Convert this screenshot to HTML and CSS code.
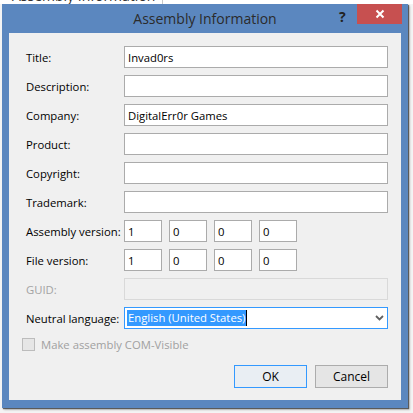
FILE: index.html
```html
<!DOCTYPE html>
<html>
<head>
<meta charset="utf-8">
<link rel="stylesheet" href="styles.css">
</head>
<body>
<div class="desktop">
  <div class="bgstrip"><span class="bgtext">Assembly Information</span><span class="bgline"></span></div>
  <div class="window">
    <div class="titlebar">
      <div class="title">Assembly Information</div>
      <div class="help">?</div>
      <div class="close">
        <svg width="10" height="10" viewBox="0 0 10 10"><path d="M1.5 1.5 L8.5 8.5 M8.5 1.5 L1.5 8.5" stroke="#fff" stroke-width="2" fill="none"/></svg>
      </div>
    </div>
    <div class="client">
      <div class="form">
        <label class="lbl">Title:</label><div class="tb">Invad0rs</div>
        <label class="lbl">Description:</label><div class="tb"></div>
        <label class="lbl">Company:</label><div class="tb">DigitalErr0r Games</div>
        <label class="lbl">Product:</label><div class="tb"></div>
        <label class="lbl">Copyright:</label><div class="tb"></div>
        <label class="lbl">Trademark:</label><div class="tb"></div>
        <label class="lbl">Assembly version:</label>
        <div class="ver"><div class="tb vb">1</div><div class="tb vb">0</div><div class="tb vb">0</div><div class="tb vb">0</div></div>
        <label class="lbl">File version:</label>
        <div class="ver"><div class="tb vb">1</div><div class="tb vb">0</div><div class="tb vb">0</div><div class="tb vb">0</div></div>
        <label class="lbl dis">GUID:</label><div class="tb tbdis"></div>
        <label class="lbl">Neutral language:</label>
        <div class="combo"><span class="sel">English (United States)</span><span class="caret"></span><span class="grow"></span>
          <svg class="chev" width="9" height="6" viewBox="0 0 9 6"><path d="M1 1 L4.5 4.5 L8 1" stroke="#606060" stroke-width="1.8" fill="none"/></svg>
        </div>
      </div>
      <div class="check"><span class="box"></span><span class="chktext">Make assembly COM-Visible</span></div>
      <div class="buttons"><div class="btn def">OK</div><div class="btn">Cancel</div></div>
    </div>
  </div>
</div>
</body>
</html>
```
FILE: styles.css
```css
html, body {
  margin: 0;
  padding: 0;
}
body {
  width: 413px;
  height: 413px;
  overflow: hidden;
  background: #f7f7f7;
  font-family: "Open Sans", "Noto Sans", sans-serif;
}
.desktop {
  width: 413px;
  height: 413px;
  background: #f4f4f4;
}
.bgstrip {
  height: 4px;
  overflow: hidden;
  background: #fff;
  display: flex;
  position: relative;
}
.bgtext {
  margin-left: 12px;
  margin-top: -12px;
  font-size: 14px;
  line-height: 16px;
  color: #333;
  width: 150px;
  white-space: nowrap;
}
.bgline {
  width: 1px;
  background: #c8c8c8;
}
.window {
  margin-left: 2px;
  width: 406px;
  height: 404px;
  background: #5b87bf;
  display: flex;
  flex-direction: column;
  box-shadow: 1px 1px 1px rgba(0,0,0,0.55), 2px 2px 2px rgba(0,0,0,0.2);
  position: relative;
}
.titlebar {
  height: 29px;
  position: relative;
}
.title {
  text-align: center;
  line-height: 29px;
  font-size: 14px;
  color: #2b2b2b;
}
.help {
  position: absolute;
  left: 337px;
  top: 4px;
  font-size: 14px;
  font-weight: bold;
  color: #222;
  line-height: 18px;
}
.close {
  position: absolute;
  left: 355px;
  top: 0;
  width: 45px;
  height: 20px;
  background: #c75050;
  display: flex;
  align-items: center;
  justify-content: center;
}
.client {
  flex: 1;
  margin: 0 7px 8px 7px;
  background: #f0f0f0;
  padding: 13px 13px 0 17px;
  font-size: 11.3px;
  color: #000;
}
.form {
  display: grid;
  grid-template-columns: 98px 1fr;
  grid-auto-rows: 22px;
  row-gap: 7px;
}
.lbl {
  display: flex;
  align-items: center;
  white-space: nowrap;
}
.lbl.dis {
  color: #a3a3a3;
}
.tb {
  box-sizing: border-box;
  height: 22px;
  border: 1px solid #ababab;
  background: #fff;
  padding-left: 3px;
  display: flex;
  align-items: center;
  white-space: nowrap;
}
.tbdis {
  background: #f0f0f0;
  border-color: #d9d9d9;
}
.ver {
  display: flex;
  gap: 7px;
}
.vb {
  width: 38px;
}
.combo {
  box-sizing: border-box;
  height: 22px;
  border: 1px solid #3399ff;
  background: #fff;
  padding-left: 2px;
  display: flex;
  align-items: center;
}
.sel {
  background: #3399ff;
  color: #fff;
  line-height: 16px;
  padding: 0 1px;
  white-space: nowrap;
}
.caret {
  width: 1px;
  height: 16px;
  background: #000;
}
.grow {
  flex: 1;
}
.chev {
  margin-right: 3px;
}
.check {
  margin-top: 9px;
  margin-left: -4px;
  display: flex;
  align-items: center;
  height: 13px;
  gap: 6px;
  color: #a0a0a0;
}
.box {
  box-sizing: border-box;
  width: 13px;
  height: 13px;
  border: 1px solid #bcbcbc;
  background: #e6e6e6;
}
.buttons {
  margin-top: 14px;
  display: flex;
  justify-content: flex-end;
  gap: 8px;
}
.btn {
  box-sizing: border-box;
  width: 73px;
  height: 23px;
  border: 1px solid #acacac;
  background: #e5e5e5;
  display: flex;
  align-items: center;
  justify-content: center;
  font-size: 12px;
}
.btn.def {
  border-color: #3399ff;
  background: #e9eef3;
}
```
